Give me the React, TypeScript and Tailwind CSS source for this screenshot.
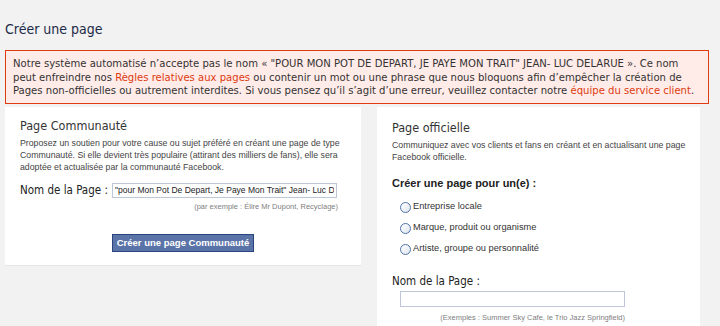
const font = "font-['Tahoma','DejaVu_Sans_Condensed','Liberation_Sans',sans-serif]";
const arial = "font-['Liberation_Sans',Arial,sans-serif]";

const Radio = ({ label }: { label: string }) => (
  <label className={`flex items-center gap-[2px] h-[21px] text-[9.25px] text-[#333] ${arial}`}>
    <span className="w-[11px] h-[11px] rounded-full border border-[#4f72a8] bg-gradient-to-br from-[#ffffff] to-[#dfe6ef]" />
    {label}
  </label>
);

export default function App() {
  const types = ['Entreprise locale', 'Marque, produit ou organisme', 'Artiste, groupe ou personnalité'];

  return (
    <div className={`w-[720px] h-[326px] overflow-hidden bg-[#f2f2f2] pl-[5px] ${font}`}>
      {/* Header */}
      <h1 className="pt-[20px] h-[50px] text-[14px] leading-[18px] text-[#1c2a47]">Créer une page</h1>

      {/* Error */}
      <div className="w-[704px] border border-[#dd3c10] bg-[#ffebe8] px-[7px] pt-[6px] pb-[5px] text-[11.2px] leading-[13.5px] text-[#333] whitespace-nowrap">
        Notre système automatisé n’accepte pas le nom « "POUR MON POT DE DEPART, JE PAYE MON TRAIT" JEAN- LUC DELARUE ». Ce nom
        <br />
        peut enfreindre nos <span className="text-[#dd3c10]">Règles relatives aux pages</span> ou contenir un mot ou une phrase que nous bloquons afin d’empêcher la création de
        <br />
        Pages non-officielles ou autrement interdites. Si vous pensez qu’il s’agit d’une erreur, veuillez contacter notre{' '}
        <span className="text-[#dd3c10]">équipe du service client</span>.
      </div>

      <div className="flex items-start gap-[16px] mt-[3px]">
        {/* Community page */}
        <div className="w-[356px] h-[159px] bg-white border-b border-[#e5e5e5] px-[15px] pt-[11px]">
          <h2 className="text-[12.5px] leading-[16px] text-[#333]">Page Communauté</h2>
          <p className={`mt-[3px] text-[8.75px] leading-[12px] text-[#444] whitespace-nowrap ${arial}`}>
            Proposez un soutien pour votre cause ou sujet préféré en créant une page de type
            <br />
            Communauté. Si elle devient très populaire (attirant des milliers de fans), elle sera
            <br />
            adoptée et actualisée par la communauté Facebook.
          </p>
          <div className="flex items-center mt-[9px]">
            <span className="w-[92px] text-[11.5px] text-[#222]">Nom de la Page :</span>
            <input
              readOnly
              value={'"pour Mon Pot De Depart, Je Paye Mon Trait" Jean- Luc Delarue'}
              className={`w-[225px] h-[15px] border border-[#bdc7d8] px-[2px] text-[8.5px] text-[#222] outline-none ${arial}`}
            />
          </div>
          <div className={`text-right pr-[8px] mt-[2px] text-[7.5px] leading-[12px] text-[#808080] ${arial}`}>
            (par exemple : Élire Mr Dupont, Recyclage)
          </div>
          <div className="flex justify-center mt-[21px]">
            <button className={`h-[18px] px-[4px] bg-[#5b74a8] border border-[#29447e] text-[9.5px] font-bold text-white leading-[16px] ${arial}`}>
              Créer une page Communauté
            </button>
          </div>
        </div>

        {/* Official page */}
        <div className="w-[323px] h-[230px] bg-white px-[15px] pt-[13px]">
          <h2 className="text-[12.5px] leading-[16px] text-[#333]">Page officielle</h2>
          <p className={`mt-[3px] text-[8.75px] leading-[12px] text-[#444] whitespace-nowrap ${arial}`}>
            Communiquez avec vos clients et fans en créant et en actualisant une page
            <br />
            Facebook officielle.
          </p>
          <h3 className={`mt-[13px] text-[11px] font-bold leading-[14px] text-[#222] ${arial}`}>Créer une page pour un(e) :</h3>
          <div className="mt-[7px] pl-[8px]">
            {types.map((t) => (
              <Radio key={t} label={t} />
            ))}
          </div>
          <div className="mt-[15px] text-[11.5px] leading-[12px] text-[#222]">Nom de la Page :</div>
          <div className="pl-[8px] mt-[0px]">
            <input readOnly className="w-[225px] h-[16px] border border-[#bdc7d8] outline-none" />
            <div className={`w-[225px] text-right mt-[1px] text-[7.5px] leading-[12px] text-[#808080] ${arial}`}>
              (Exemples : Summer Sky Cafe, le Trio Jazz Springfield)
            </div>
          </div>
        </div>
      </div>
    </div>
  );
}
